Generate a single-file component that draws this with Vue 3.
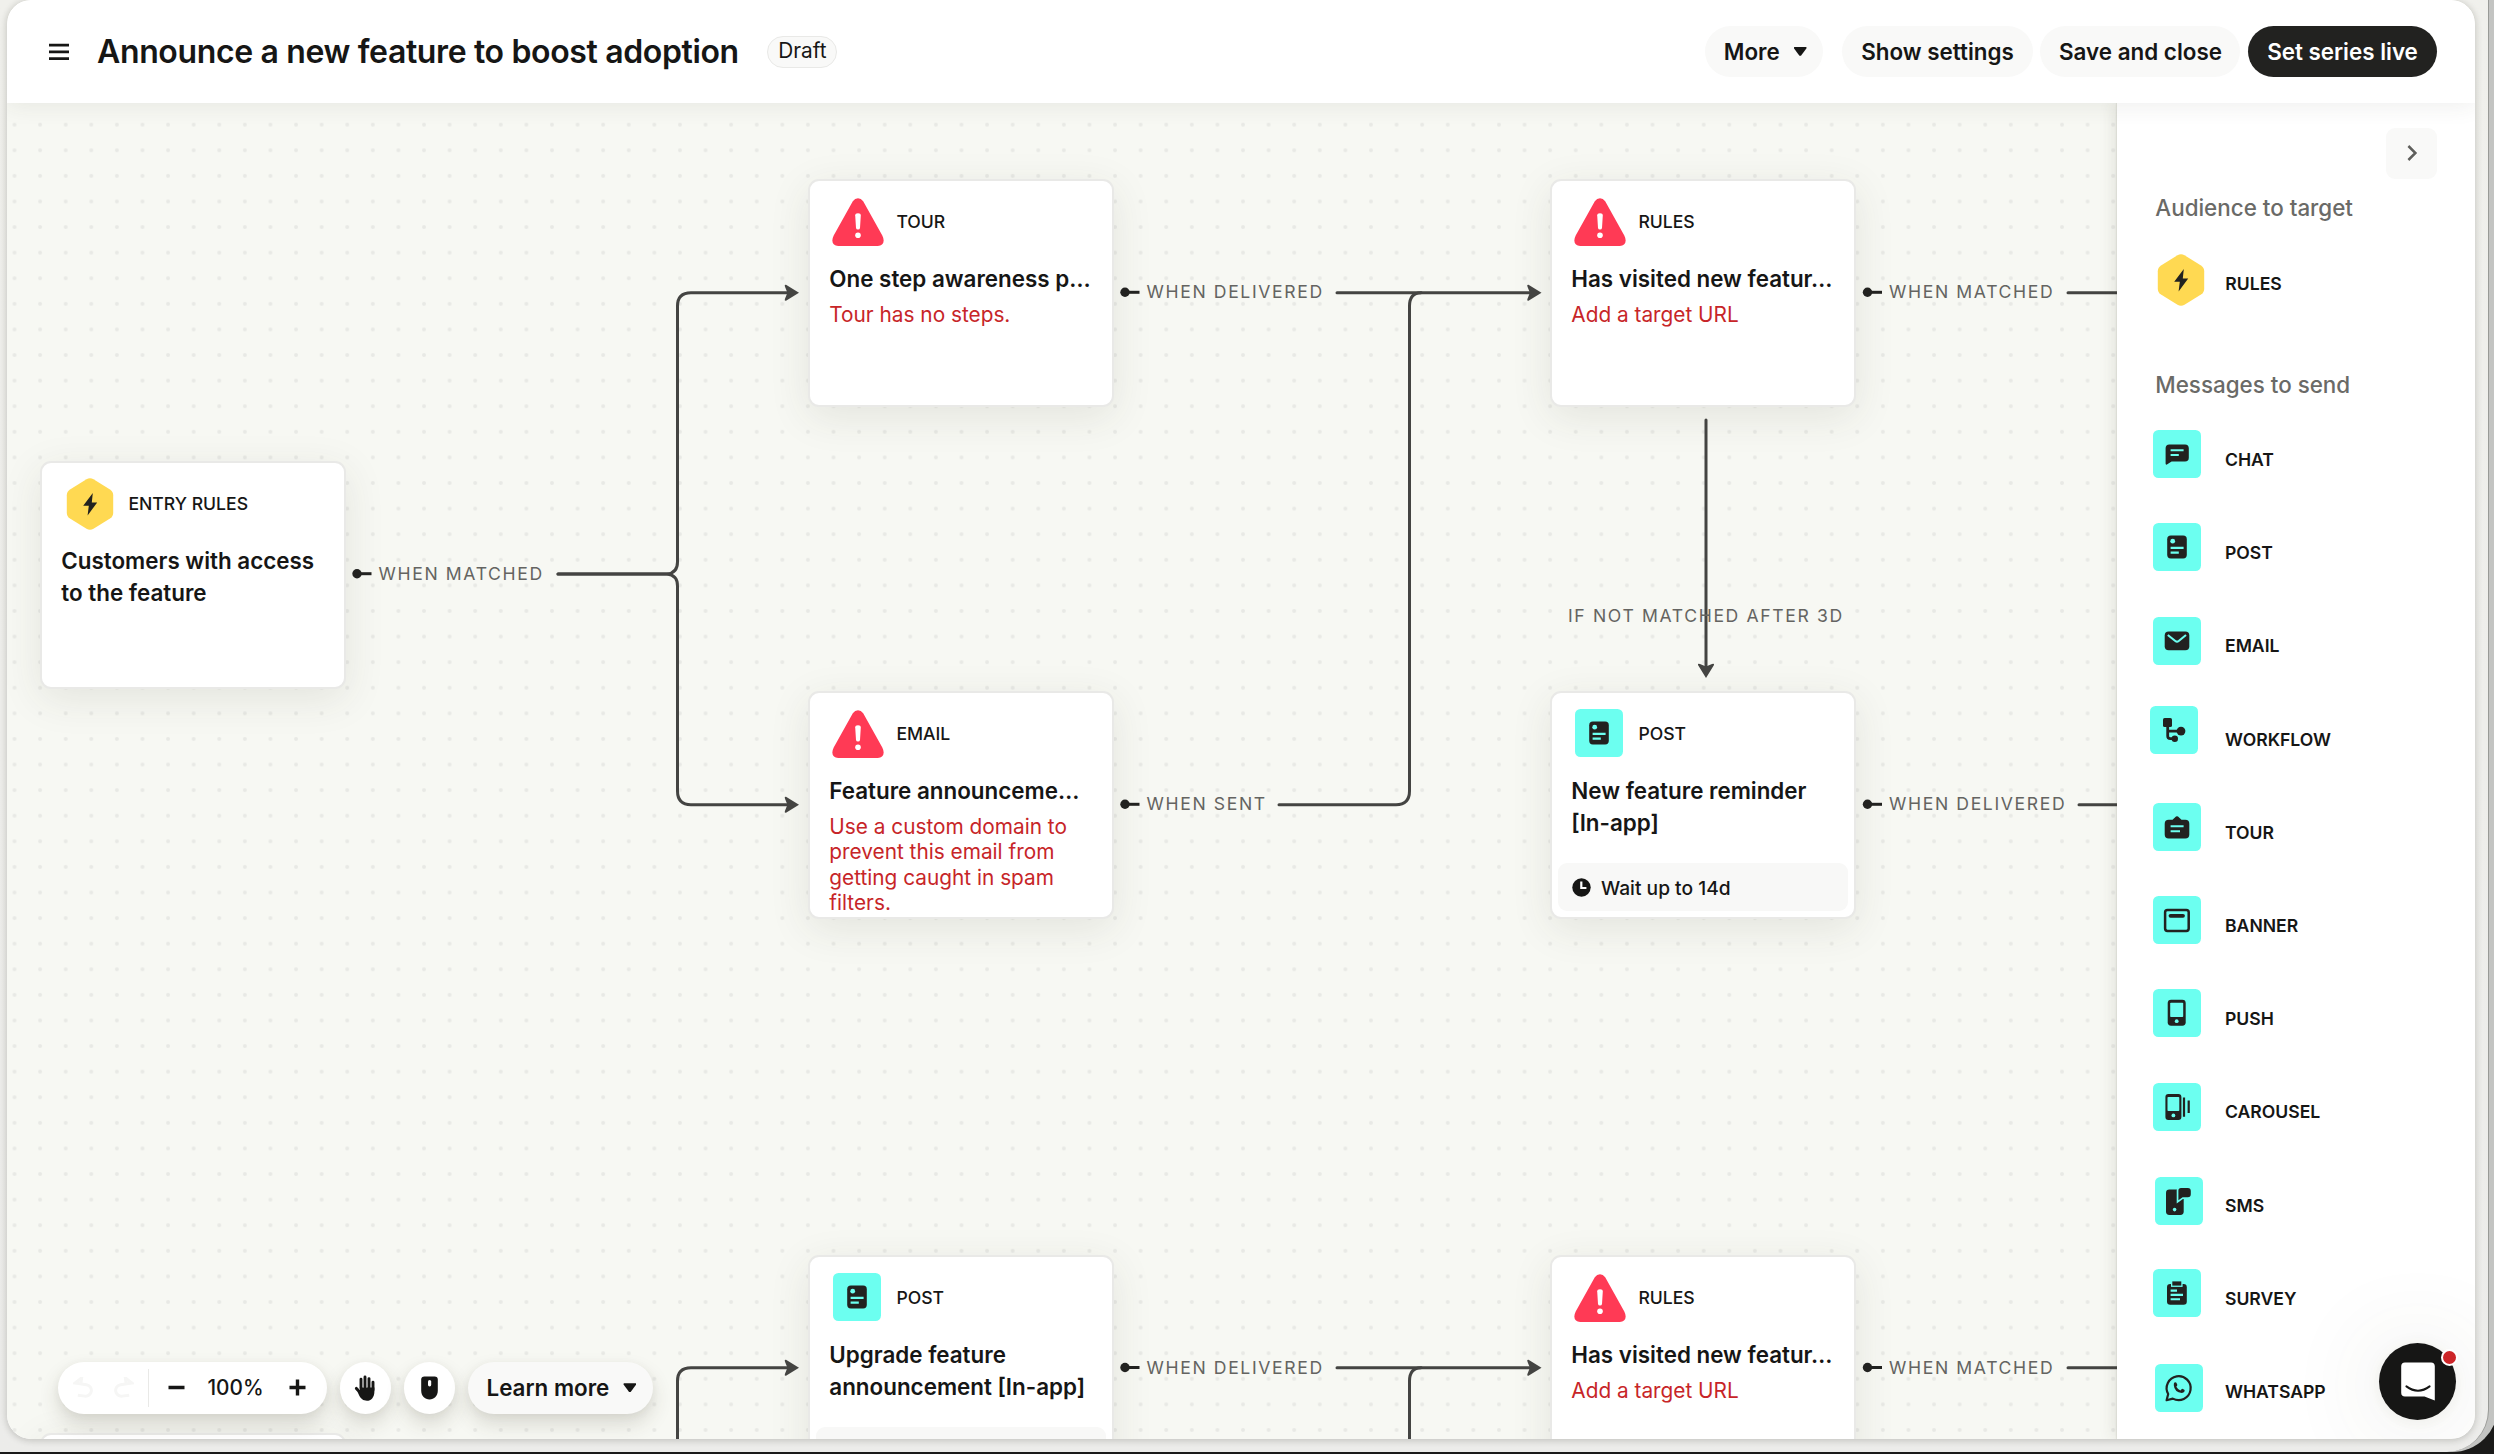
<script setup>
// Canvas coordinates are measured from the window's top-left corner.
const ORIGIN = { x: 7, y: 103 }

const nodes = [
  { x: 42, y: 462.6, icon: 'hex', label: 'ENTRY RULES', title: ['Customers with access', 'to the feature'] },
  { x: 810, y: 180.6, icon: 'warn', label: 'TOUR', title: ['One step awareness p…'], error: 'Tour has no steps.' },
  { x: 1552, y: 180.6, icon: 'warn', label: 'RULES', title: ['Has visited new featur…'], error: 'Add a target URL' },
  { x: 810, y: 692.6, icon: 'warn', label: 'EMAIL', title: ['Feature announceme…'], error: 'Use a custom domain to prevent this email from getting caught in spam filters.' },
  { x: 1552, y: 692.6, icon: 'post', label: 'POST', title: ['New feature reminder', '[In-app]'], wait: 'Wait up to 14d' },
  { x: 810, y: 1256.6, icon: 'post', label: 'POST', title: ['Upgrade feature', 'announcement [In-app]'], wait: ' ' },
  { x: 1552, y: 1256.6, icon: 'warn', label: 'RULES', title: ['Has visited new featur…'], error: 'Add a target URL' },
  { x: 42, y: 1435, icon: 'hex', label: '', title: [] },
]

const nodeStyle = (n) => ({ left: n.x - 2 - ORIGIN.x + 'px', top: n.y - 2 - ORIGIN.y + 'px' })

const stubs = [
  { x: 357, y: 573.7, text: 'WHEN MATCHED' },
  { x: 1125, y: 292.3, text: 'WHEN DELIVERED' },
  { x: 1867.5, y: 292.3, text: 'WHEN MATCHED' },
  { x: 1125, y: 804.3, text: 'WHEN SENT' },
  { x: 1867.5, y: 804.3, text: 'WHEN DELIVERED' },
  { x: 1125, y: 1367.5, text: 'WHEN DELIVERED' },
  { x: 1867.5, y: 1367.5, text: 'WHEN MATCHED' },
]

const lines = [
  'M558 574H667Q677.5 573 677.5 562V306Q677.5 292.7 691 292.7H790',
  'M558 574H667Q677.5 575 677.5 586V791Q677.5 804.7 691 804.7H790',
  'M1337 292.7H1532',
  'M1279 804.7H1396Q1409.5 804.7 1409.5 791V306Q1409.5 293 1421 292.7',
  'M2068 292.7H2140',
  'M2079 804.7H2140',
  'M1706 420V668',
  'M677.5 1450V1381Q677.5 1367.7 691 1367.7H790',
  'M1337 1367.7H1532',
  'M1409.5 1450V1381Q1409.5 1368 1421 1367.7',
  'M2068 1367.7H2140',
]

const arrows = [
  [799, 292.7, 0], [799, 804.7, 0], [1541.5, 292.7, 0], [1706, 678, 90], [799, 1367.7, 0], [1541.5, 1367.7, 0],
]

const messages = [
  { id: 'chat', label: 'CHAT' },
  { id: 'post', label: 'POST' },
  { id: 'email', label: 'EMAIL' },
  { id: 'workflow', label: 'WORKFLOW' },
  { id: 'tour', label: 'TOUR' },
  { id: 'banner', label: 'BANNER' },
  { id: 'push', label: 'PUSH' },
  { id: 'carousel', label: 'CAROUSEL' },
  { id: 'sms', label: 'SMS' },
  { id: 'survey', label: 'SURVEY' },
  { id: 'whatsapp', label: 'WHATSAPP' },
]
</script>

<template>
  <div class="desktop">
    <svg width="0" height="0" class="defs">
      <defs>
        <symbol id="hex" viewBox="0 0 48 52">
          <path d="M20.5 1.2Q24 -.8 27.5 1.2L44 11.5Q47.2 13.6 47.2 17.3V34.7Q47.2 38.4 44 40.5L27.5 50.8Q24 52.8 20.5 50.8L4 40.5Q.8 38.4 .8 34.7V17.3Q.8 13.6 4 11.5Z" fill="#ffd952" />
          <path d="M26.8 15L17.2 27.7H22.8L21.6 37.5L31.2 24.4H25.8Z" fill="#222220" />
        </symbol>
        <symbol id="warn" viewBox="0 0 52 52">
          <path d="M20.8 5.2Q23 2.2 26 2.2Q29 2.2 31.2 5.2L50.3 39.5Q53.2 45.5 50 48.6Q48.6 50 45.8 50H6.2Q3.4 50 2 48.6Q-1.2 45.5 1.7 39.5Z" fill="#ff3a55" />
          <path d="M23.2 19.6Q23.2 17.2 26 17.2T28.8 19.6L28 32Q27.8 33.6 26 33.6T24 32Z" fill="#fff" />
          <circle cx="26" cy="39.3" r="2.8" fill="#fff" />
        </symbol>
        <symbol id="post" viewBox="0 0 48 48">
          <rect width="48" height="48" rx="5.5" fill="#6cfff0" />
          <rect x="14.2" y="12.6" width="19.6" height="22.8" rx="3.6" fill="#222220" />
          <circle cx="19.7" cy="18.2" r="2.4" fill="#6cfff0" />
          <path d="M17.6 24.9H30.6M17.6 29.6H25.8" stroke="#6cfff0" stroke-width="2.1" />
        </symbol>
      </defs>
    </svg>

    <div class="backdrop"></div>
    <div class="frame">
      <main class="app">
        <header class="topbar">
          <svg class="burger" width="22" height="18" viewBox="0 0 22 18">
            <path d="M1 2.1H21M1 8.9H21M1 15.7H21" stroke="#161615" stroke-width="2.8" />
          </svg>
          <h1>Announce a new feature to boost adoption</h1>
          <span class="badge">Draft</span>
          <div class="actions">
            <button class="btn more">More <i class="caret"></i></button>
            <button class="btn show">Show settings</button>
            <button class="btn save">Save and close</button>
            <button class="btn live">Set series live</button>
          </div>
        </header>

        <div class="body">
          <section class="canvas">
            <article v-for="(n, i) in nodes" :key="i" class="node" :style="nodeStyle(n)">
              <div class="node-head">
                <span class="node-icon" :class="n.icon">
                  <svg><use :href="'#' + n.icon" /></svg>
                </span>
                <span class="node-label">{{ n.label }}</span>
              </div>
              <h2><span v-for="t in n.title" :key="t">{{ t }}</span></h2>
              <p v-if="n.error" class="error">{{ n.error }}</p>
              <footer v-if="n.wait" class="wait">
                <svg width="19" height="19" viewBox="0 0 19 19">
                  <circle cx="9.5" cy="9.5" r="9.2" fill="#161615" />
                  <path d="M9.3 3.4V10H14.4" fill="none" stroke="#fff" stroke-width="2.2" />
                </svg>
                {{ n.wait }}
              </footer>
            </article>

            <svg class="edges" viewBox="7 103 2110 1336">
              <path v-for="d in lines" :key="d" :d="d" class="line" />
              <path
                v-for="([x, y, r], i) in arrows"
                :key="i"
                d="M0 0L-13 -8Q-15 -8.4 -14 -6L-11.6 0L-14 6Q-15 8.4 -13 8Z"
                class="head"
                :transform="`translate(${x} ${y}) rotate(${r})`"
              />
              <g v-for="(s, i) in stubs" :key="'s' + i" :transform="`translate(${s.x} ${s.y})`">
                <circle r="4.7" class="dot" />
                <path d="M0 0H14.5" class="stub" />
                <text x="21.5" y="6" class="edge-label">{{ s.text }}</text>
              </g>
              <text x="1568" y="621.5" class="edge-label">IF NOT MATCHED AFTER 3D</text>
            </svg>

            <div class="toolbar">
              <div class="pill zoom">
                <svg width="21" height="21" viewBox="0 0 21 21" class="ghost">
                  <path d="M3.6 7.2H13A5.8 5.8 0 0 1 13 18.8H6M7.4 1.2L1.6 7.2H7.4Z" transform="rotate(8 10 10)" />
                </svg>
                <svg width="21" height="21" viewBox="0 0 21 21" class="ghost redo">
                  <path d="M17.4 7.2H8A5.8 5.8 0 0 0 8 18.8H15M13.6 1.2L19.4 7.2H13.6Z" transform="rotate(-8 11 10)" />
                </svg>
                <i class="rule"></i>
                <svg width="17" height="17" viewBox="0 0 17 17"><path d="M0.5 8.5H16.5" stroke="#161615" stroke-width="3.4" /></svg>
                <span class="percent">100%</span>
                <svg width="17" height="17" viewBox="0 0 17 17"><path d="M.5 8.5H16.5M8.5 .5V16.5" stroke="#161615" stroke-width="3.4" /></svg>
              </div>
              <div class="pill round">
                <svg width="22" height="26" viewBox="0 0 22 26" fill="none" stroke="#161615" stroke-linecap="round" stroke-linejoin="round">
                  <path d="M7 4.2V13M11 2V12M15 3.6V13M19 7.2V15" stroke-width="2.9" />
                  <path d="M2.4 13.4L6.2 17.6" stroke-width="3" />
                  <path d="M5.8 12.4H20.4V16.5C20.4 22.5 17 25.8 13 25.8C9 25.8 7 23.8 5.2 20.6L3.4 16.6L6 17Z" fill="#161615" stroke="none" />
                </svg>
              </div>
              <div class="pill round">
                <svg width="17" height="24" viewBox="0 0 17 24">
                  <path d="M3.4 .4H13.6Q16.8 .4 16.8 3.6V14.5C16.8 20 13.2 23.4 8.5 23.4S.2 20 .2 14.5V3.6Q.2 .4 3.4 .4Z" fill="#161615" />
                  <rect x="7" y="4" width="3.2" height="6.4" rx="1.6" fill="#fff" />
                </svg>
              </div>
              <div class="pill learn">Learn more <i class="caret"></i></div>
            </div>
          </section>

          <aside class="sidebar">
            <div class="collapse">
              <svg width="12" height="18" viewBox="0 0 12 18"><path d="M2.4 2L9.4 9L2.4 16" fill="none" stroke="#5f5f5c" stroke-width="2.5" /></svg>
            </div>
            <h3>Audience to target</h3>
            <div class="rule-item">
              <svg width="48" height="52"><use href="#hex" /></svg>
              <span>RULES</span>
            </div>
            <h3 class="second">Messages to send</h3>
            <ul>
              <li v-for="m in messages" :key="m.id">
                <svg :class="m.id" class="tile" width="48" height="48" viewBox="0 0 48 48">
                  <use v-if="m.id === 'post'" href="#post" />
                  <rect v-else width="48" height="48" rx="5.5" fill="#6cfff0" />
                  <g v-if="m.id === 'chat'">
                    <path d="M16.4 14.4H32Q35.8 14.4 35.8 18.2V27.8Q35.8 31.6 32 31.6H18.6L13.9 34.6Q12.6 35.2 12.6 33.6V18.2Q12.6 14.4 16.4 14.4Z" class="ink" />
                    <path d="M17.6 20.3H30.6M17.6 25H25.8" class="cut" />
                  </g>
                  <g v-else-if="m.id === 'email'">
                    <rect x="11.7" y="14.4" width="24.6" height="18.8" rx="4" class="ink" />
                    <path d="M14.8 18L22.3 24Q24 25.3 25.7 24L33 18" class="cut" />
                  </g>
                  <g v-else-if="m.id === 'workflow'">
                    <rect x="13" y="12" width="9" height="9" rx="1.6" class="ink" />
                    <path d="M17.7 20V30Q17.7 32.7 20.4 32.7H25M17.7 25.1H30" class="stroke" stroke-width="2.8" />
                    <circle cx="31" cy="25.1" r="4.4" class="ink" />
                    <circle cx="24.8" cy="32.7" r="3.2" class="ink" />
                  </g>
                  <g v-else-if="m.id === 'tour'">
                    <path d="M15.7 16.8H19.5L23 13.6Q24 12.8 25 13.6L28.5 16.8H32.3Q36.3 16.8 36.3 20.8V31.5Q36.3 35.5 32.3 35.5H15.7Q11.7 35.5 11.7 31.5V20.8Q11.7 16.8 15.7 16.8Z" class="ink" />
                    <path d="M17.6 23.3H30.6M17.6 28.2H27" class="cut" />
                  </g>
                  <g v-else-if="m.id === 'banner'">
                    <rect x="12.1" y="13.9" width="23.6" height="21" rx="2.4" class="stroke" stroke-width="2.5" />
                    <path d="M17.5 19.8H30" class="stroke" stroke-width="3.8" stroke-linecap="round" />
                  </g>
                  <g v-else-if="m.id === 'push'">
                    <rect x="14.7" y="10.7" width="18" height="26" rx="3.4" class="ink" />
                    <rect x="17.2" y="13.8" width="13" height="14.2" rx=".8" fill="#6cfff0" />
                    <circle cx="23.7" cy="32.2" r="1.9" fill="#6cfff0" />
                  </g>
                  <g v-else-if="m.id === 'carousel'">
                    <rect x="12.4" y="11" width="16" height="26" rx="3" class="ink" />
                    <rect x="14.5" y="14" width="11.8" height="14" rx=".8" fill="#6cfff0" />
                    <circle cx="20.4" cy="32.4" r="1.9" fill="#6cfff0" />
                    <path d="M31 14.4V33.8M35.7 17.6V30" class="stroke" stroke-width="2.2" />
                  </g>
                  <g v-else-if="m.id === 'sms'">
                    <rect x="11" y="12.6" width="17.7" height="25.4" rx="3.4" class="ink" />
                    <path d="M26 11H32.8Q35.8 11 35.8 14V17.2Q35.8 20.2 32.8 20.2H27.6L23.4 23.2V13.6Q23.4 11 26 11Z" class="ink" stroke="#6cfff0" stroke-width="3.4" paint-order="stroke" />
                    <circle cx="19.6" cy="32.6" r="1.8" fill="#6cfff0" />
                  </g>
                  <g v-else-if="m.id === 'survey'">
                    <rect x="14" y="15" width="19.8" height="20.8" rx="3.2" class="ink" />
                    <rect x="19.3" y="12.4" width="9" height="4.2" class="ink" stroke="#6cfff0" stroke-width="2.6" paint-order="stroke" />
                    <path d="M17.6 21.6H24M17.6 25.9H30M17.6 30.2H27" class="cut" />
                  </g>
                  <g v-else-if="m.id === 'whatsapp'">
                    <path d="M11.6 36.2L13.2 30A12 12 0 1 1 17.8 34.6Z" class="stroke" stroke-width="2.2" stroke-linejoin="round" />
                    <path d="M19.4 18.6Q20.6 17.6 21.4 18.8L22.3 20.8Q22.4 21.6 21.3 22.8Q22.8 25.4 25.4 26.4L26.8 25Q27.3 24.6 28.4 25.2L29.6 26Q30 28.4 26.9 28.9Q19.4 28.2 18.8 21.2Q18.7 19.4 19.4 18.6Z" class="ink" />
                  </g>
                </svg>
                <span>{{ m.label }}</span>
              </li>
            </ul>
          </aside>
        </div>

        <div class="messenger">
          <svg width="34" height="39" viewBox="0 0 34 39">
            <path d="M4 .4H30Q33.8 .4 33.8 4.2V38.4L23.5 34.6H4Q.2 34.6 .2 30.8V4.2Q.2 .4 4 .4Z" fill="#fff" />
            <path d="M5.4 24.4Q17 33 28.6 24.4" fill="none" stroke="#161615" stroke-width="2" stroke-linecap="round" />
          </svg>
          <i class="unread"></i>
        </div>
      </main>
    </div>
  </div>
</template>

<style>
body {
  margin: 0;
  overflow: hidden;
}
</style>

<style scoped>
.desktop {
  position: relative;
  width: 2494px;
  height: 1454px;
  overflow: hidden;
  background: #1a1a19;
  font-family: Inter, "Liberation Sans", sans-serif;
  color: #161615;
}
.desktop * {
  box-sizing: border-box;
}
.defs {
  position: absolute;
}
.backdrop {
  position: absolute;
  inset: 0 -4px 2px 0;
  background: #c3c4c2;
  border-radius: 0 0 46px 0;
}
.frame {
  position: relative;
  width: 2489px;
  height: 1452px;
  padding: 0 13px 13px 7px;
  background: linear-gradient(#f0f0ec, #ececea);
  border-right: 1px solid #999a97;
  border-radius: 0 0 42px 0;
}
.app {
  position: relative;
  display: flex;
  flex-direction: column;
  height: 1439px;
  border-radius: 24px;
  overflow: hidden;
  background: #fff;
  clip-path: inset(0 round 24px);
}
.frame::before {
  content: "";
  position: absolute;
  inset: 0 13px 13px 7px;
  border-radius: 24px;
  box-shadow: 0 1px 6px 1px rgba(40, 40, 30, 0.2);
}
.topbar {
  position: relative;
  z-index: 2;
  display: flex;
  align-items: center;
  flex: none;
  height: 103px;
  padding: 0 38px 0 41px;
  background: #fff;
  box-shadow: 0 2px 22px rgba(60, 60, 40, 0.09);
}
.burger {
  margin-right: 27px;
}
h1 {
  margin: 0;
  font-size: 32px;
  font-weight: 600;
  line-height: 40px;
  letter-spacing: -0.36px;
  white-space: nowrap;
}
.badge {
  display: flex;
  align-items: center;
  justify-content: center;
  width: 70px;
  height: 32px;
  margin-left: 28.5px;
  padding-bottom: 2px;
  border: 1.5px solid #e9e9e7;
  border-radius: 16px;
  background: #f9f9f8;
  font-size: 20.8px;
  font-weight: 400;
}
.actions {
  display: flex;
  margin-left: auto;
}
.btn {
  display: flex;
  align-items: center;
  justify-content: center;
  height: 51px;
  padding: 0;
  border: 0;
  border-radius: 26px;
  background: #f9f9f8;
  color: inherit;
  font: 600 22.4px/32px Inter, sans-serif;
  white-space: nowrap;
}
.caret {
  display: block;
  width: 13px;
  height: 9px;
  margin-left: 14px;
  background: #161615;
  clip-path: polygon(4% 0, 96% 0, 100% 12%, 56% 96%, 44% 96%, 0 12%);
}
.more {
  width: 118px;
  margin-right: 19px;
  padding-left: 2.5px;
}
.show {
  width: 191px;
  margin-right: 7px;
}
.save {
  width: 200px;
  margin-right: 8px;
  padding-left: 1px;
}
.live {
  width: 189px;
  background: #222220;
  color: #fff;
}
.body {
  display: flex;
  flex: 1;
  min-height: 0;
}
.canvas {
  position: relative;
  flex: 1;
  overflow: hidden;
  background-color: #f7f8f3;
  background-image: radial-gradient(circle at center, #e8e9e5 1.4px, rgba(232, 233, 229, 0) 2.4px);
  background-size: 25.6px 25.6px;
  background-position: -5.3px 8.9px;
}
.node {
  position: absolute;
  width: 306px;
  height: 228px;
  overflow: hidden;
  border: 2px solid #e9e9e7;
  border-radius: 11px;
  background: #fff;
  box-shadow: 0 10px 40px rgba(60, 60, 40, 0.1);
}
.node-head {
  display: flex;
  align-items: center;
  gap: 12.4px;
  height: 52px;
  margin: 15px 0 15px 22px;
}
.node-icon {
  display: flex;
  justify-content: center;
  width: 52px;
  height: 52px;
}
.node-icon svg {
  width: 52px;
  height: 52px;
}
.node-icon.hex svg {
  width: 48px;
  margin-right: 1px;
}
.node-icon.post svg {
  width: 48px;
  height: 48px;
  margin: 1px 3px 0 0;
}
.node-label {
  font-size: 17.6px;
  font-weight: 450;
  line-height: 24px;
}
h2 {
  display: flex;
  flex-direction: column;
  margin: 0 0 7px 19.3px;
  font-size: 22.4px;
  font-weight: 600;
  line-height: 32px;
  white-space: nowrap;
}
.error {
  width: 262px;
  margin: 0 0 0 19.3px;
  color: #c72528;
  font-size: 20.8px;
  line-height: 25.5px;
}
.wait {
  position: absolute;
  left: 6px;
  top: 170px;
  display: flex;
  align-items: center;
  gap: 10.5px;
  width: 290px;
  height: 48px;
  padding: 2px 0 0 13.5px;
  border-radius: 9px;
  background: #f8f8f7;
  font-size: 19.2px;
  font-weight: 500;
}
.edges {
  position: absolute;
  left: 0;
  top: 0;
  width: 2110px;
  height: 1336px;
}
.line {
  fill: none;
  stroke: #444442;
  stroke-width: 3;
  stroke-linecap: round;
}
.head {
  fill: #444442;
}
.dot {
  fill: #222220;
}
.stub {
  stroke: #222220;
  stroke-width: 3;
}
.edge-label {
  fill: #646461;
  font-size: 17.6px;
  font-weight: 400;
  letter-spacing: 1.63px;
}
.toolbar {
  position: absolute;
  left: 50.5px;
  top: 1259px;
  display: flex;
  gap: 13px;
}
.pill {
  display: flex;
  align-items: center;
  height: 51.5px;
  border-radius: 26px;
  background: #fff;
  box-shadow: 0 10px 20px rgba(60, 55, 40, 0.16), 0 2px 8px rgba(60, 55, 40, 0.05);
  font-size: 22.4px;
  font-weight: 500;
}
.zoom {
  width: 269px;
  padding-left: 15px;
}
.ghost path {
  fill: none;
  stroke: #f6f6f5;
  stroke-width: 3;
}
.redo {
  margin-left: 19px;
}
.rule {
  width: 1.5px;
  height: 38px;
  margin: 0 18.5px 0 14px;
  background: #e9e9e7;
}
.percent {
  width: 58px;
  margin: 0 24px 0 22px;
  font-size: 20.8px;
  text-align: center;
}
.round {
  justify-content: center;
  width: 51px;
}
.learn {
  width: 185px;
  padding-left: 19px;
  background: #f9f9f8;
  font-weight: 600;
  white-space: nowrap;
}
.sidebar {
  position: relative;
  z-index: 1;
  flex: none;
  width: 358px;
  padding: 24.6px 38px 0 36.2px;
  background: #fff;
  box-shadow: -1px 0 1px rgba(60, 60, 40, 0.08), -4px 0 14px rgba(60, 60, 40, 0.1);
}
.collapse {
  display: flex;
  align-items: center;
  justify-content: center;
  width: 51px;
  height: 51px;
  margin-left: auto;
  border-radius: 9px;
  background: #f9f9f8;
}
h3 {
  margin: 13.4px 0 0 2.1px;
  color: #6a6a67;
  font-size: 22.4px;
  font-weight: 500;
  line-height: 32px;
  white-space: nowrap;
}
.rule-item {
  display: flex;
  align-items: center;
  gap: 20px;
  height: 52px;
  margin: 30px 0 0 4.1px;
}
.rule-item span {
  padding-top: 7px;
}
.rule-item span,
li span {
  font-size: 17.6px;
  font-weight: 600;
}
h3.second {
  margin-top: 63px;
}
ul {
  margin: 12px 0 0;
  padding: 0;
  list-style: none;
}
li {
  display: flex;
  align-items: center;
  gap: 23.8px;
  height: 93.2px;
}
.tile {
  position: relative;
  top: -5.4px;
}
.tile.workflow {
  top: -8.8px;
  left: -3px;
}
.tile.sms,
.tile.whatsapp {
  top: -3.9px;
  left: 1.8px;
}
.ink {
  fill: #222220;
}
.cut {
  fill: none;
  stroke: #6cfff0;
  stroke-width: 2.1;
}
.stroke {
  fill: none;
  stroke: #222220;
}
.messenger {
  position: absolute;
  z-index: 3;
  right: 19px;
  bottom: 19px;
  display: flex;
  align-items: center;
  justify-content: center;
  width: 77px;
  height: 77px;
  border-radius: 50%;
  background: #161615;
  box-shadow: 0 2px 14px rgba(80, 80, 40, 0.07), 0 4px 100px rgba(80, 80, 50, 0.14);
}
.unread {
  position: absolute;
  right: -2px;
  top: 6px;
  width: 17px;
  height: 17px;
  border: 2px solid #fff;
  border-radius: 50%;
  background: #cc2528;
}
</style>
